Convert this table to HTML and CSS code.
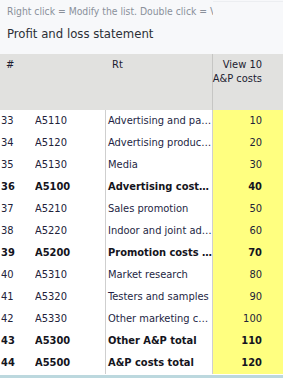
FILE: index.html
```html
<!DOCTYPE html>
<html>
<head>
<meta charset="utf-8">
<link rel="stylesheet" href="styles.css">
</head>
<body>
<div class="page">
  <div class="top">
    <div class="top-left">
      <div class="hint">Right click = Modify the list. Double click = View the details</div>
      <div class="title">Profit and loss statement</div>
    </div>
    <div class="top-right"></div>
  </div>
  <div class="thead">
    <div class="th-left">
      <span class="th-hash">#</span>
      <span class="th-rt">Rt</span>
    </div>
    <div class="th-val">View 10<br>A&amp;P costs</div>
  </div>
  <div class="tbody">
    <div class="row"><span class="c-no">33</span><span class="c-code">A5110</span><span class="c-name">Advertising and packaging</span><span class="c-val">10</span></div>
    <div class="row"><span class="c-no">34</span><span class="c-code">A5120</span><span class="c-name">Advertising production</span><span class="c-val">20</span></div>
    <div class="row"><span class="c-no">35</span><span class="c-code">A5130</span><span class="c-name">Media</span><span class="c-val">30</span></div>
    <div class="row bold"><span class="c-no">36</span><span class="c-code">A5100</span><span class="c-name">Advertising costs total</span><span class="c-val">40</span></div>
    <div class="row"><span class="c-no">37</span><span class="c-code">A5210</span><span class="c-name">Sales promotion</span><span class="c-val">50</span></div>
    <div class="row"><span class="c-no">38</span><span class="c-code">A5220</span><span class="c-name">Indoor and joint advertising</span><span class="c-val">60</span></div>
    <div class="row bold"><span class="c-no">39</span><span class="c-code">A5200</span><span class="c-name">Promotion costs total</span><span class="c-val">70</span></div>
    <div class="row"><span class="c-no">40</span><span class="c-code">A5310</span><span class="c-name">Market research</span><span class="c-val">80</span></div>
    <div class="row"><span class="c-no">41</span><span class="c-code">A5320</span><span class="c-name">Testers and samples</span><span class="c-val">90</span></div>
    <div class="row"><span class="c-no">42</span><span class="c-code">A5330</span><span class="c-name">Other marketing costs</span><span class="c-val">100</span></div>
    <div class="row bold"><span class="c-no">43</span><span class="c-code">A5300</span><span class="c-name">Other A&amp;P total</span><span class="c-val">110</span></div>
    <div class="row bold"><span class="c-no">44</span><span class="c-code">A5500</span><span class="c-name">A&amp;P costs total</span><span class="c-val">120</span></div>
  </div>
  <div class="bottom"></div>
</div>
</body>
</html>
```

FILE: styles.css
```css
html, body {
  margin: 0;
  padding: 0;
  background: #ffffff;
}
body {
  width: 283px;
  height: 378px;
  overflow: hidden;
  font-family: "DejaVu Sans Condensed", "DejaVu Sans", sans-serif;
  font-size: 11px;
  color: #22223a;
}
.page {
  display: flex;
  flex-direction: column;
  width: 283px;
  height: 378px;
}
.top {
  display: flex;
  height: 54px;
  background: #f7f8fa;
}
.top-left {
  width: 213px;
  overflow: hidden;
}
.top-right {
  flex: 1;
  margin-top: 1px;
  border-top: 1px solid #eceef1;
}
.hint {
  padding: 4px 0 0 7px;
  white-space: nowrap;
  overflow: hidden;
  color: #8a909a;
  font-size: 10.3px;
  line-height: 14px;
}
.title {
  padding: 7px 0 0 7px;
  white-space: nowrap;
  color: #2c2f36;
  font-size: 13px;
  line-height: 17px;
}
.thead {
  display: flex;
  height: 56px;
  background: #e1e1df;
}
.th-left {
  width: 212px;
  border-right: 1px solid #c6c6c4;
  display: flex;
  padding-top: 4px;
  line-height: 14px;
  color: #1c1c30;
}
.th-hash {
  width: 106px;
  padding-left: 6px;
  box-sizing: border-box;
}
.th-rt {
  padding-left: 6px;
}
.th-val {
  flex: 1;
  text-align: right;
  white-space: nowrap;
  padding: 4px 21px 0 0;
  line-height: 14px;
  color: #1c1c30;
}
.tbody {
  display: flex;
  flex-direction: column;
  flex: 1;
}
.row {
  display: grid;
  grid-template-columns: 35px 70px 107px 71px;
  height: 22px;
  line-height: 22px;
}
.row > span {
  white-space: nowrap;
  overflow: hidden;
}
.c-no {
  padding-left: 1px;
}
.c-name {
  border-left: 1px solid #cfcfcf;
  padding-left: 2px;
  text-overflow: ellipsis;
  color: #241f44;
}
.c-val {
  border-left: 1px solid #cfcfcf;
  background: #ffff80;
  text-align: right;
  padding-right: 21px;
}
.bold {
  font-weight: bold;
  color: #141420;
}
.bold .c-name {
  color: #141420;
}
.bottom {
  height: 3px;
  background: #bcd8de;
}
```
